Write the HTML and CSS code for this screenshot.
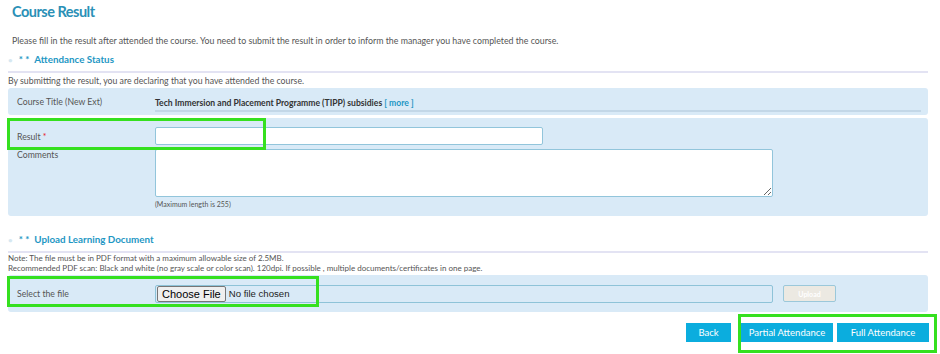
FILE: index.html
```html
<!DOCTYPE html>
<html>
<head>
  <title>Course Result</title>
  <link rel="stylesheet" href="styles.css">
</head>
<body>
  <div class="page">
    <h1 class="page-title">Course Result</h1>
    <p class="intro">Please fill in the result after attended the course. You need to submit the result in order to inform the manager you have completed the course.</p>

    <div class="section-head"><span class="dot">•</span><span class="stars">* *</span>Attendance Status</div>
    <p class="note note-lead">By submitting the result, you are declaring that you have attended the course.</p>

    <div class="panel panel-course">
      <div class="row">
        <span class="label">Course Title (New Ext)</span>
        <span class="value">Tech Immersion and Placement Programme (TIPP) subsidies <a href="#" class="more">[ more ]</a></span>
      </div>
    </div>

    <div class="panel panel-form">
      <div class="row row-result">
        <label class="label" for="result">Result <span class="req">*</span></label>
        <input type="text" id="result" class="result-input">
      </div>
      <div class="row row-comments">
        <label class="label" for="comments">Comments</label>
        <div class="field">
          <textarea id="comments" class="comments"></textarea>
          <div class="hint">(Maximum length is 255)</div>
        </div>
      </div>
    </div>

    <div class="section-head section-upload"><span class="dot">•</span><span class="stars">* *</span>Upload Learning Document</div>
    <p class="note note-tight">Note: The file must be in PDF format with a maximum allowable size of 2.5MB.</p>
    <p class="note note-tight">Recommended PDF scan: Black and white (no gray scale or color scan). 120dpi. If possible , multiple documents/certificates in one page.</p>

    <div class="panel panel-file">
      <div class="row">
        <span class="label">Select the file</span>
        <div class="file-box"><span class="choose">Choose File</span><span class="no-file">No file chosen</span></div>
        <button class="upload" disabled>Upload</button>
      </div>
    </div>

    <div class="actions">
      <button class="btn">Back</button>
      <button class="btn">Partial Attendance</button>
      <button class="btn">Full Attendance</button>
    </div>

    <div class="mark mark-result"></div>
    <div class="mark mark-file"></div>
    <div class="mark mark-actions"></div>
  </div>
</body>
</html>
```

FILE: styles.css
```css
body {
  margin: 0;
  padding: 0;
  font-family: Lato, "Open Sans", sans-serif;
  color: #555;
  background: #fff;
}

.page {
  position: relative;
  width: 920px;
  height: 354px;
  padding: 0 12px 0 8px;
}

.page-title {
  margin: 0;
  padding: 3px 0 0 4px;
  height: 28px;
  font-size: 14.5px;
  letter-spacing: -0.5px;
  font-weight: bold;
  color: #2a90b6;
}

.intro {
  margin: 0;
  padding-left: 4px;
  height: 20px;
  line-height: 20px;
  font-size: 8.8px;
  color: #555;
}

.section-head {
  height: 12px;
  line-height: 12px;
  padding: 2px 0 6px 0;
  border-bottom: 2px solid #e3e3f3;
  font-size: 9.8px;
  font-weight: bold;
  color: #1e97c4;
}

.section-head .dot {
  color: #d6e8f1;
  font-size: 8px;
  margin-right: 6px;
}

.section-head .stars {
  margin-right: 5px;
}

.note {
  margin: 0;
  height: 15px;
  line-height: 15px;
  font-size: 8px;
  color: #555;
}

.note-lead {
  font-size: 8.75px;
}

.note-tight {
  height: 10px;
  line-height: 10px;
}

.panel {
  background: #d9eaf7;
  border-radius: 3px;
  padding: 0 7px 0 9px;
}

.row {
  display: flex;
  align-items: center;
}

.label {
  width: 138px;
  flex-shrink: 0;
  font-size: 8.7px;
  color: #555;
}

.req {
  color: #e8202a;
}

.panel-course {
  height: 27px;
  margin-bottom: 3px;
}

.panel-course .row {
  height: 27px;
}

.panel-course .value {
  flex: 1;
  line-height: 12px;
  margin-top: 5px;
  padding-bottom: 1px;
  border-bottom: 2px solid #c3d7e7;
  font-size: 8.6px;
  font-weight: bold;
  color: #333;
}

.more {
  color: #1e97c4;
  text-decoration: none;
}

.panel-form {
  padding-top: 9px;
  height: 89px;
}

.row-result {
  height: 18px;
}

.result-input {
  width: 388px;
  height: 18px;
  box-sizing: border-box;
  border: 1px solid #92c5db;
  border-radius: 2px;
  background: #fff;
  margin: 0;
}

.row-comments {
  margin-top: 4px;
  align-items: flex-start;
}

.comments {
  display: block;
  width: 618px;
  height: 48px;
  box-sizing: border-box;
  border: 1px solid #92c5db;
  border-radius: 2px;
  margin: 0;
  resize: both;
}

.hint {
  font-size: 7px;
  margin-top: 3px;
  color: #555;
}

.section-upload {
  margin-top: 15px;
}

.panel-file {
  margin-top: 2px;
  height: 37px;
}

.panel-file .row {
  height: 37px;
}

.file-box {
  display: flex;
  align-items: center;
  width: 618px;
  height: 18px;
  box-sizing: border-box;
  border: 1px solid #8ec3d8;
  border-radius: 2px;
  padding-left: 1px;
}

.choose {
  font-family: "Liberation Sans", Arial, sans-serif;
  font-size: 11px;
  color: #000;
  background: #efefef;
  border: 1px solid #767676;
  border-radius: 2px;
  padding: 0 4px;
  height: 14px;
  line-height: 14px;
}

.no-file {
  font-family: "Liberation Sans", Arial, sans-serif;
  font-size: 9.6px;
  color: #222;
  margin-left: 3px;
}

.upload {
  margin-left: 10px;
  width: 53px;
  height: 17px;
  border: 1px solid #9bc8da;
  border-radius: 2px;
  background: #ece9e2;
  color: #fff;
  font-family: Lato, sans-serif;
  font-size: 7px;
  font-weight: bold;
}

.actions {
  display: flex;
  justify-content: flex-end;
  gap: 4px;
  margin-top: 11px;
  margin-right: -1px;
}

.btn {
  height: 19px;
  padding: 0;
  border: none;
  background: #0badde;
  color: #fff;
  font-family: Lato, sans-serif;
  font-size: 9.5px;
  cursor: pointer;
}

.actions .btn:first-child {
  width: 45px;
  margin-right: 6px;
}

.actions .btn:nth-child(2),
.actions .btn:nth-child(3) {
  width: 92px;
}

.mark {
  position: absolute;
  border: 3px solid #35e01f;
  box-sizing: border-box;
}

.mark-result {
  left: 7px;
  top: 118px;
  width: 259px;
  height: 32px;
}

.mark-file {
  left: 7px;
  top: 276px;
  width: 312px;
  height: 31px;
}

.mark-actions {
  left: 738px;
  top: 314px;
  width: 199px;
  height: 39px;
}
```
